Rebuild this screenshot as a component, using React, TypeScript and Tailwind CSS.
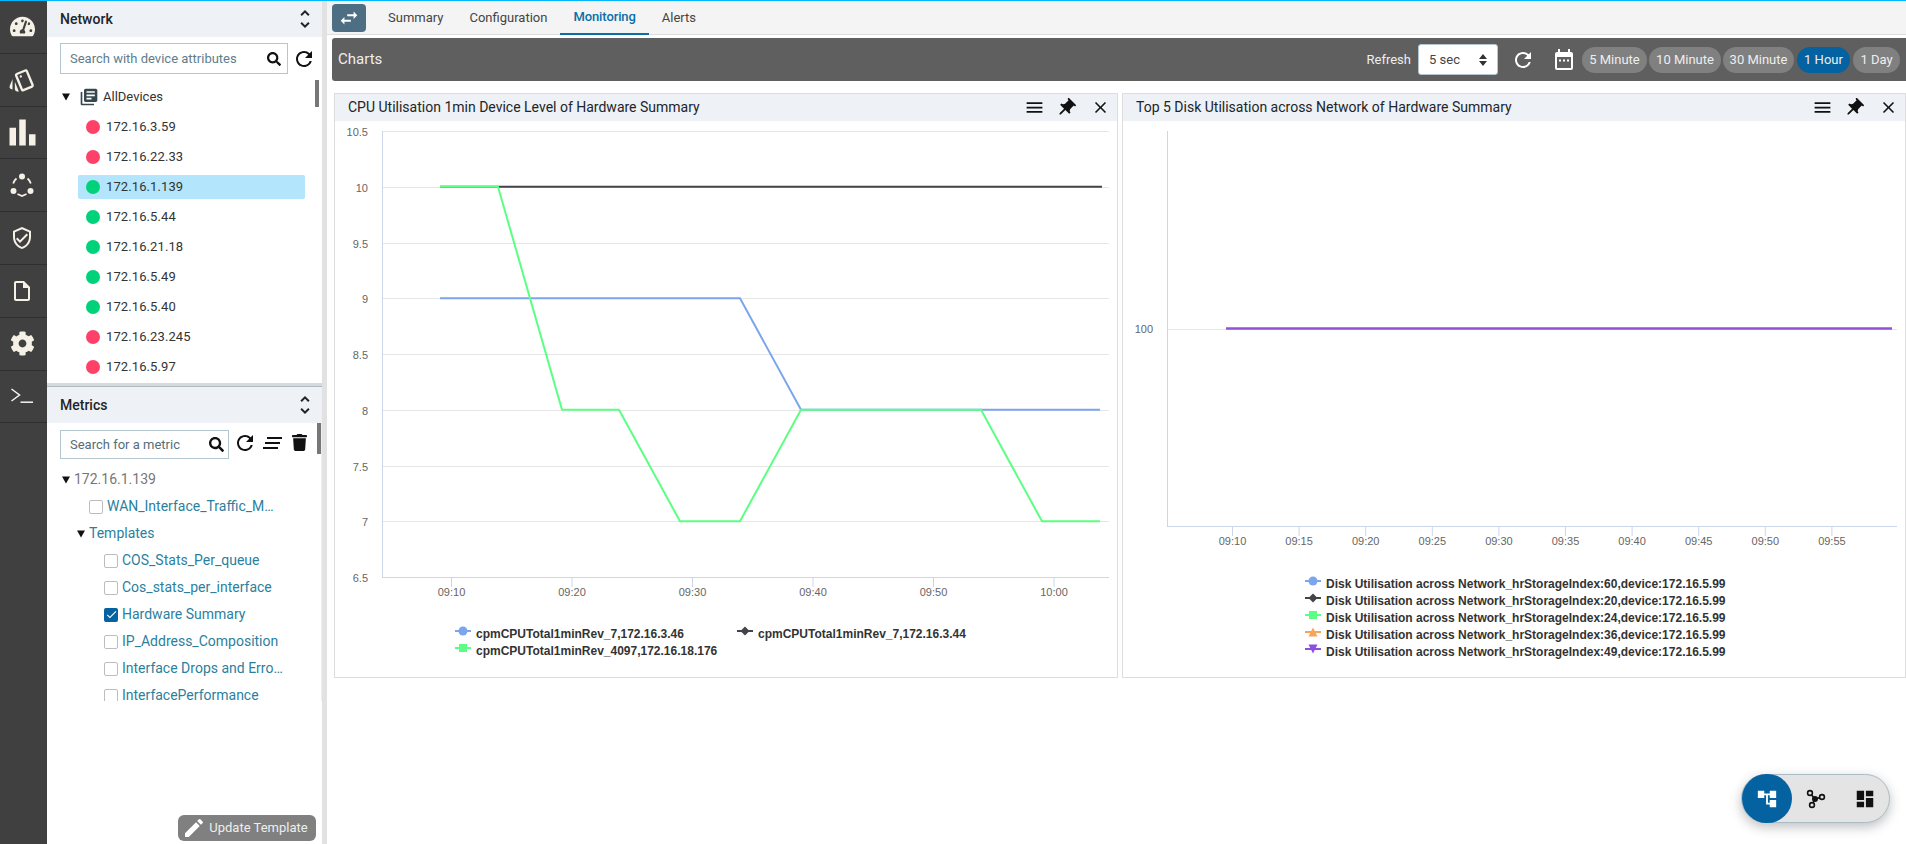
import React from "react";
import {
  FaTachometerAlt, FaCog, FaSearch, FaTrash,
} from "react-icons/fa";
import {
  MdOutlineStyle, MdBarChart, MdOutlineVerifiedUser, MdOutlineInsertDriveFile, MdUnfoldMore,
  MdRefresh, MdLibraryBooks, MdEdit, MdMenu, MdClose, MdPushPin, MdAccountTree, MdDashboard, MdCheck, MdSwapHoriz,
} from "react-icons/md";

const Ring = () => (
  <svg width="26" height="26" viewBox="0 0 26 26" fill="none" stroke="#f5f1e6" strokeWidth="1.8">
    <path d="M4.2 11.5 Q5 8.5 7.5 6.5 M21.8 11.5 Q21 8.5 18.5 6.5 M8.5 22 L13 24 L17.5 22" />
    <g fill="#f5f1e6" stroke="none">
      <circle cx="13" cy="4.5" r="3" />
      <circle cx="4.5" cy="19" r="3" />
      <circle cx="21.5" cy="19" r="3" />
    </g>
  </svg>
);

const Term = () => (
  <svg width="24" height="18" viewBox="0 0 24 18" fill="none" stroke="#f5f5f5" strokeWidth="1.5">
    <path d="M1.5 2 L9.5 8 L1.5 14" />
    <path d="M10.5 15.2 H23" />
  </svg>
);

const Branch = () => (
  <svg width="22" height="20" viewBox="0 0 22 20" fill="none" stroke="#111" strokeWidth="1.6">
    <path d="M5 4 L10 10 L17 8 M10 10 L7 16" />
    <circle cx="5" cy="4" r="2.4" fill="#e4e4e4" />
    <circle cx="17" cy="8" r="2.4" fill="#e4e4e4" />
    <circle cx="7" cy="16" r="2.4" fill="#e4e4e4" />
    <circle cx="10" cy="10" r="3" fill="#111" stroke="none" />
  </svg>
);

const navIcons = [
  <FaTachometerAlt size={25} color="#f5f1e6" />,
  <MdOutlineStyle size={28} color="#f5f1e6" />,
  <MdBarChart size={39} color="#f5f1e6" />,
  <Ring />,
  <MdOutlineVerifiedUser size={24} color="#f5f1e6" />,
  <MdOutlineInsertDriveFile size={24} color="#f5f1e6" />,
  <FaCog size={25} color="#f5f1e6" />,
  <Term />,
];

const devices: [string, boolean][] = [
  ["172.16.3.59", false],
  ["172.16.22.33", false],
  ["172.16.1.139", true],
  ["172.16.5.44", true],
  ["172.16.21.18", true],
  ["172.16.5.49", true],
  ["172.16.5.40", true],
  ["172.16.23.245", false],
  ["172.16.5.97", false],
];

const Tri = () => (
  <svg width="8" height="8" viewBox="0 0 8 8" className="shrink-0">
    <path d="M0 0.5 H8 L4 7.5 Z" fill="#111" />
  </svg>
);

const Check = ({ on = false }: { on?: boolean }) => (
  <span
    className={
      on
        ? "flex h-[14px] w-[14px] shrink-0 items-center justify-center rounded-[2px] bg-[#0462a1]"
        : "h-[14px] w-[14px] shrink-0 rounded-[2px] border border-[#bdbdbd] bg-white"
    }
  >
    {on && <MdCheck size={13} color="#fff" />}
  </span>
);

const PanelHeader = ({ title }: { title: string }) => (
  <div className="flex h-[36px] shrink-0 items-center justify-between bg-[#eef1f5] pl-[13px] pr-[5px]">
    <span className="text-[14px] font-medium text-[#212529]">{title}</span>
    <MdUnfoldMore size={24} color="#222" />
  </div>
);

const Metric = ({ label, indent, on, w }: { label: string; indent: string; on?: boolean; w: string }) => (
  <div className={`flex h-[27px] items-center gap-[4px] ${indent}`}>
    <Check on={on} />
    <span className={`truncate text-[14px] text-[#2b7f9e] ${w}`}>{label}</span>
  </div>
);

const Sorter = () => (
  <svg width="19" height="12" viewBox="0 0 19 12" fill="none" stroke="#111" strokeWidth="1.8">
    <path d="M4 1 H19 M2 6 H17 M0 11 H15" />
  </svg>
);

const Calendar = () => (
  <svg width="18" height="21" viewBox="0 0 18 21" fill="none">
    <path d="M3 0 H5 V3 H13 V0 H15 V3 H16 a2 2 0 0 1 2 2 V19 a2 2 0 0 1 -2 2 H2 a2 2 0 0 1 -2 -2 V5 a2 2 0 0 1 2 -2 H3 Z M2 8 V19 H16 V8 Z" fill="#fff" fillRule="evenodd" />
    <rect x="4" y="10.5" width="2" height="2" fill="#fff" />
    <rect x="8" y="10.5" width="2" height="2" fill="#fff" />
    <rect x="12" y="10.5" width="2" height="2" fill="#fff" />
  </svg>
);

const axisFont = "'Liberation Sans', Arial, sans-serif";

const Axis = ({ children, view, w, h }: { children: React.ReactNode; view: string; w: number; h: number }) => (
  <svg width={w} height={h} viewBox={view} className="block shrink-0" style={{ fontFamily: axisFont }}>
    {children}
  </svg>
);

const Marker = ({ kind, color }: { kind: string; color: string }) => (
  <svg width="16" height="10" viewBox="0 0 16 10" className="mb-[5px] shrink-0">
    <rect x="0" y="4" width="16" height="2" fill={color} />
    {kind === "circle" && <circle cx="8" cy="5" r="4.5" fill={color} />}
    {kind === "diamond" && <path d="M8 0.5 L12.5 5 L8 9.5 L3.5 5 Z" fill={color} />}
    {kind === "square" && <rect x="4" y="1" width="8" height="8" fill={color} />}
    {kind === "tri" && <path d="M8 0.5 L12.5 9.5 H3.5 Z" fill={color} />}
    {kind === "triDown" && <path d="M3.5 0.5 H12.5 L8 9.5 Z" fill={color} />}
  </svg>
);

const LegendItem = ({ kind, color, label }: { kind: string; color: string; label: string }) => (
  <div className="flex h-[17px] items-center gap-[5px]">
    <Marker kind={kind} color={color} />
    <span className="whitespace-nowrap text-[12px] font-bold text-[#333333]" style={{ fontFamily: axisFont }}>{label}</span>
  </div>
);

const CardHeader = ({ title }: { title: string }) => (
  <div className="flex h-[27px] shrink-0 items-center justify-between bg-[#eef1f5] pl-[13px] pr-[7px]">
    <span className="text-[14px] text-[#212529]">{title}</span>
    <div className="flex items-center">
      <MdMenu size={21} color="#111" />
      <MdPushPin size={22} color="#111" className="ml-[10px] rotate-45" />
      <MdClose size={19} color="#111" className="ml-[14px]" />
    </div>
  </div>
);

const y1 = (v: number) => 131.5 + (10.5 - v) * 111.5;
const grid = (v: number) => Math.floor(y1(v)) + 0.5;
const yTicks = [10.5, 10, 9.5, 9, 8.5, 8, 7.5, 7, 6.5];
const xTicks1: [number, string][] = [[451.5, "09:10"], [572, "09:20"], [692.5, "09:30"], [813, "09:40"], [933.5, "09:50"], [1054, "10:00"]];
const xTicks2 = ["09:10", "09:15", "09:20", "09:25", "09:30", "09:35", "09:40", "09:45", "09:50", "09:55"];

const pts = (a: [number, number][]) => a.map(([x, v]) => `${x},${y1(v) - 0.5}`).join(" ");

const CpuChart = () => (
  <Axis w={782} h={504} view="335 121 782 504">
    {yTicks.map((v) => (
      <g key={v}>
        <line x1="382" x2="1109" y1={grid(v)} y2={grid(v)} stroke="#e6e6e6" />
        <text x="368" y={grid(v) + 4} textAnchor="end" fontSize="11" fill="#666666">{v}</text>
      </g>
    ))}
    <line x1="382.5" x2="382.5" y1="131" y2="577" stroke="#ccd6eb" />
    <line x1="382" x2="1109" y1="577.5" y2="577.5" stroke="#ccd6eb" />
    {xTicks1.map(([x, t]) => (
      <g key={t}>
        <line x1={x} x2={x} y1="577" y2="587" stroke="#ccd6eb" />
        <text x={x} y="596" textAnchor="middle" fontSize="11" fill="#666666">{t}</text>
      </g>
    ))}
    <polyline fill="none" stroke="#7ca5ec" strokeWidth="2" points={pts([[440, 9], [740, 9], [801, 8], [1100, 8]])} />
    <polyline fill="none" stroke="#434348" strokeWidth="2" points={pts([[440, 10], [1102, 10]])} />
    <polyline fill="none" stroke="#5cff84" strokeWidth="2" points={pts([[440, 10], [498, 10], [562, 8], [619, 8], [680, 7], [740, 7], [801, 8], [981, 8], [1042, 7], [1100, 7]])} />
  </Axis>
);

const DiskChart = () => (
  <Axis w={782} h={454} view="1123 121 782 454">
    <line x1="1167" x2="1897" y1="329.5" y2="329.5" stroke="#e6e6e6" />
    <text x="1153" y="333" textAnchor="end" fontSize="11" fill="#666666">100</text>
    <line x1="1167.5" x2="1167.5" y1="131" y2="526" stroke="#ccd6eb" />
    <line x1="1167" x2="1897" y1="526.5" y2="526.5" stroke="#ccd6eb" />
    {xTicks2.map((t, i) => {
      const x = 1232.5 + i * 66.6;
      return (
        <g key={t}>
          <line x1={x} x2={x} y1="526" y2="536" stroke="#ccd6eb" />
          <text x={x} y="545" textAnchor="middle" fontSize="11" fill="#666666">{t}</text>
        </g>
      );
    })}
    <line x1="1226" x2="1892" y1="328.5" y2="328.5" stroke="#9350d8" strokeWidth="2.5" />
  </Axis>
);

const disk = ["60", "20", "24", "36", "49"];
const diskStyle: [string, string][] = [["circle", "#7ca5ec"], ["diamond", "#434348"], ["square", "#5cff84"], ["tri", "#f7a35c"], ["triDown", "#8d4fe0"]];

const Pill = ({ label, w, active }: { label: string; w: string; active?: boolean }) => (
  <span className={`flex h-[26px] items-center justify-center rounded-full text-[13px] text-[#eeeeee] ${w} ${active ? "bg-[#0462a1]" : "bg-[#808080]"}`}>
    {label}
  </span>
);

export default function App() {
  return (
    <div className="relative flex h-screen flex-col overflow-hidden bg-white" style={{ fontFamily: "Roboto, sans-serif" }}>
      <div className="h-px shrink-0 bg-[#00b8ff]" />
      <div className="flex min-h-0 flex-1">
        <nav className="w-[47px] shrink-0 bg-[#404040]">
          {navIcons.map((icon, i) => (
            <div key={i} className="flex h-[52.8px] items-center justify-center border-b border-[#2f2f2f] pr-[3px]">
              {icon}
            </div>
          ))}
        </nav>

        <aside className="flex w-[275px] shrink-0 flex-col bg-white">
          <PanelHeader title="Network" />
          <div className="relative h-[346px] shrink-0 overflow-hidden">
            <div className="flex items-center gap-[4px] pl-[13px] pt-[6px]">
              <div className="flex h-[31px] w-[228px] items-center justify-between border border-[#b4c6d0] pl-[9px] pr-[6px]">
                <span className="text-[13px] text-[#607d8b]">Search with device attributes</span>
                <FaSearch size={14} color="#111" />
              </div>
              <MdRefresh size={24} color="#111" />
            </div>
            <div className="flex h-[31px] items-center pl-[15px] pt-[15px]">
              <Tri />
              <MdLibraryBooks size={20} color="#37474f" className="ml-[9px]" />
              <span className="ml-[4px] text-[13px] text-[#333]">AllDevices</span>
            </div>
            <div className="pl-[31px] pt-[7px]">
              {devices.map(([ip, up], i) => (
                <div key={ip} className="flex h-[30px] items-center">
                  <div className={`flex h-[24px] w-[227px] items-center gap-[6px] rounded-[2px] pl-[8px] ${i === 2 ? "bg-[#b3e5fc]" : ""}`}>
                    <span className={`h-[14px] w-[14px] rounded-full ${up ? "bg-[#00d27a]" : "bg-[#ff4069]"}`} />
                    <span className="text-[13px] tracking-[0.1px] text-[#333]">{ip}</span>
                  </div>
                </div>
              ))}
            </div>
            <div className="absolute right-[3px] top-[43px] h-[27px] w-[4px] bg-[#777]" />
          </div>
          <div className="h-[3px] shrink-0 bg-[#d9d9d9]" />
          <div className="h-px shrink-0 bg-[#a9bcc8]" />
          <PanelHeader title="Metrics" />
          <div className="relative h-[278px] shrink-0 overflow-hidden border-r border-r-[#eeeeee] pr-[4px]">
            <div className="flex items-center pl-[13px] pt-[7px]">
              <div className="flex h-[29px] w-[169px] items-center justify-between border border-[#b4c6d0] pl-[9px] pr-[4px]">
                <span className="text-[13px] text-[#546e7a]">Search for a metric</span>
                <FaSearch size={15} color="#111" />
              </div>
              <div className="flex items-center pb-[4px] pl-[4px]">
                <MdRefresh size={24} color="#111" />
                <span className="ml-[6px] flex"><Sorter /></span>
                <FaTrash size={17} color="#111" className="ml-[9px]" />
              </div>
            </div>
            <div className="pl-[15px] pt-[7px]">
              <div className="flex h-[27px] items-center gap-[4px]">
                <Tri />
                <span className="text-[14px] text-[#777777]">172.16.1.139</span>
              </div>
              <Metric label="WAN_Interface_Traffic_Monitoring" indent="pl-[27px]" w="w-[172px]" />
              <div className="flex h-[27px] items-center gap-[4px] pl-[15px]">
                <Tri />
                <span className="text-[14px] text-[#2b7f9e]">Templates</span>
              </div>
              <Metric label="COS_Stats_Per_queue" indent="pl-[42px]" w="w-[165px]" />
              <Metric label="Cos_stats_per_interface" indent="pl-[42px]" w="w-[165px]" />
              <Metric label="Hardware Summary" indent="pl-[42px]" on w="w-[165px]" />
              <Metric label="IP_Address_Composition" indent="pl-[42px]" w="w-[165px]" />
              <Metric label="Interface Drops and Errors Summary" indent="pl-[42px]" w="w-[165px]" />
              <Metric label="InterfacePerformance" indent="pl-[42px]" w="w-[165px]" />
            </div>
            <div className="absolute right-0 top-0 h-[31px] w-[4px] bg-[#777]" />
          </div>
          <div className="flex flex-1 items-start justify-end pr-[6px] pt-[114px]">
            <button className="flex h-[26px] w-[138px] items-center justify-center gap-[3px] rounded-[6px] bg-[#808080] pr-[4px] text-[13px] text-[#eeeeee]">
              <MdEdit size={24} color="#fff" />
              Update Template
            </button>
          </div>
        </aside>

        <div className="w-[5px] shrink-0 bg-[#e2e2e2]" />

        <main className="flex min-w-0 flex-1 flex-col">
          <div className="flex h-[34px] shrink-0 items-center border-b border-[#dddddd] bg-[#f4f4f4] pl-[5px]">
            <span className="flex h-[28px] w-[34px] items-center justify-center rounded-[4px] bg-[#4e6e84]">
              <MdSwapHoriz size={22} color="#fff" />
            </span>
            <div className="ml-[9px] flex h-[34px] text-[13px] text-[#444]">
              <span className="flex items-center px-[13px]">Summary</span>
              <span className="flex items-center px-[13px]">Configuration</span>
              <span className="flex items-center border-b-2 border-[#0a6ea8] px-[13px] font-medium tracking-[-0.1px] text-[#0a6ea8]">Monitoring</span>
              <span className="flex items-center px-[13px]">Alerts</span>
            </div>
          </div>

          <div className="ml-[5px] mt-[3px] flex h-[43px] shrink-0 items-center rounded-l-[3px] bg-[#5f5f5f] pl-[6px] pr-[6px]">
            <span className="text-[15px] text-[#eeeeee]">Charts</span>
            <div className="ml-auto flex items-center">
              <span className="text-[13px] text-[#eeeeee]">Refresh</span>
              <div className="ml-[7px] flex h-[31px] w-[80px] items-center justify-between rounded-[3px] border border-[#b4c6d0] bg-white pl-[10px] pr-[10px] text-[13px] text-[#444]">
                5 sec
                <svg width="8" height="12" viewBox="0 0 8 12" fill="#333"><path d="M4 0 L8 5 H0 Z M0 7 H8 L4 12 Z" /></svg>
              </div>
              <MdRefresh size={24} color="#fff" className="ml-[13px]" />
              <span className="ml-[20px] flex"><Calendar /></span>
              <div className="ml-[9px] flex items-center">
                <Pill label="5 Minute" w="w-[65px]" />
                <span className="w-[2px]" />
                <Pill label="10 Minute" w="w-[72px]" />
                <span className="w-[2px]" />
                <Pill label="30 Minute" w="w-[71px]" />
                <span className="w-[3px]" />
                <Pill label="1 Hour" w="w-[53px]" active />
                <span className="w-[3px]" />
                <Pill label="1 Day" w="w-[47px]" />
              </div>
            </div>
          </div>

          <div className="ml-[7px] mt-[12px] flex gap-[4px]">
            <section className="flex h-[585px] w-[784px] shrink-0 flex-col border border-[#dddddd]">
              <CardHeader title="CPU Utilisation 1min Device Level of Hardware Summary" />
              <CpuChart />
              <div className="grid grid-cols-[282px_auto] justify-start pl-[120px]">
                <LegendItem kind="circle" color="#7ca5ec" label="cpmCPUTotal1minRev_7,172.16.3.46" />
                <LegendItem kind="diamond" color="#434348" label="cpmCPUTotal1minRev_7,172.16.3.44" />
                <LegendItem kind="square" color="#5cff84" label="cpmCPUTotal1minRev_4097,172.16.18.176" />
              </div>
            </section>
            <section className="flex h-[585px] min-w-0 flex-1 flex-col border border-[#dddddd]">
              <CardHeader title="Top 5 Disk Utilisation across Network of Hardware Summary" />
              <DiskChart />
              <div className="pl-[182px]">
                {disk.map((d, i) => (
                  <LegendItem key={d} kind={diskStyle[i][0]} color={diskStyle[i][1]} label={`Disk Utilisation across Network_hrStorageIndex:${d},device:172.16.5.99`} />
                ))}
              </div>
            </section>
          </div>
        </main>
      </div>

      <div className="absolute bottom-[21px] right-[16px] flex h-[49px] w-[149px] items-center rounded-full border border-[#a9bcc8] bg-[#e4e4e4] shadow-[0_4px_12px_rgba(0,0,0,0.25)]">
        <span className="flex h-[49px] w-[50px] items-center justify-center rounded-full bg-[#0462a1]">
          <MdAccountTree size={22} color="#fff" />
        </span>
        <span className="flex w-[49px] justify-center"><Branch /></span>
        <span className="flex w-[49px] justify-center"><MdDashboard size={22} color="#111" /></span>
      </div>
    </div>
  );
}
